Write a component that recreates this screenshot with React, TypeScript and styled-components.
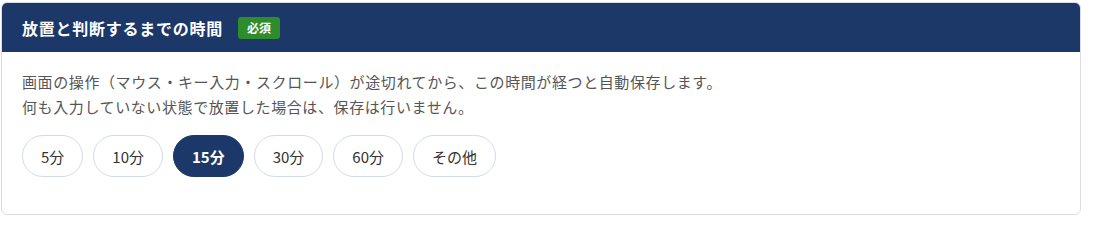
import React, { useState } from "react";
import styled, { createGlobalStyle } from "styled-components";

const Global = createGlobalStyle`
  html, body { margin: 0; padding: 0; background: #ffffff; }
  body { font-family: "Noto Sans CJK JP", "Noto Sans", sans-serif; }
  * { box-sizing: border-box; }
`;

const Page = styled.div`
  padding: 2px 0 0 1px;
`;

const Card = styled.section`
  width: 1080px;
  border: 1px solid #dadde2;
  border-radius: 6px;
  overflow: hidden;
  background: #fff;
`;

const Header = styled.header`
  height: 49px;
  background: #1c3869;
  display: flex;
  align-items: center;
  gap: 15px;
  padding: 0 20px;
`;

const Title = styled.h2`
  margin: 0;
  color: #fff;
  font-size: 16px;
  font-weight: 700;
  letter-spacing: 0.75px;
`;

const Badge = styled.span`
  display: inline-flex;
  align-items: center;
  justify-content: center;
  height: 22px;
  padding: 0 9px;
  border-radius: 3px;
  background: #2f8c2c;
  color: #fff;
  font-size: 12px;
  font-weight: 700;
`;

const Body = styled.div`
  padding: 17px 20px 37px;
`;

const Desc = styled.p`
  margin: 0;
  color: #555;
  font-size: 15px;
  line-height: 25px;
  letter-spacing: 0.6px;
`;

const Options = styled.div`
  display: flex;
  gap: 10px;
  margin-top: 16px;
`;

const Option = styled.button<{ $active?: boolean }>`
  height: 42px;
  padding: 0 18px;
  border-radius: 21px;
  border: 1px solid ${(p) => (p.$active ? "#1c3869" : "#d3dbe6")};
  background: ${(p) => (p.$active ? "#1c3869" : "#fff")};
  color: ${(p) => (p.$active ? "#fff" : "#333")};
  font-family: inherit;
  font-size: 15px;
  font-weight: ${(p) => (p.$active ? 700 : 400)};
  cursor: pointer;
`;

const options = ["5分", "10分", "15分", "30分", "60分", "その他"];

export default function App() {
  const [sel, setSel] = useState("15分");
  return (
    <Page>
      <Global />
      <Card>
        <Header>
          <Title>放置と判断するまでの時間</Title>
          <Badge>必須</Badge>
        </Header>
        <Body>
          <Desc>
            画面の操作（マウス・キー入力・スクロール）が途切れてから、この時間が経つと自動保存します。
            <br />
            何も入力していない状態で放置した場合は、保存は行いません。
          </Desc>
          <Options>
            {options.map((o) => (
              <Option key={o} $active={o === sel} onClick={() => setSel(o)}>
                {o}
              </Option>
            ))}
          </Options>
        </Body>
      </Card>
    </Page>
  );
}
